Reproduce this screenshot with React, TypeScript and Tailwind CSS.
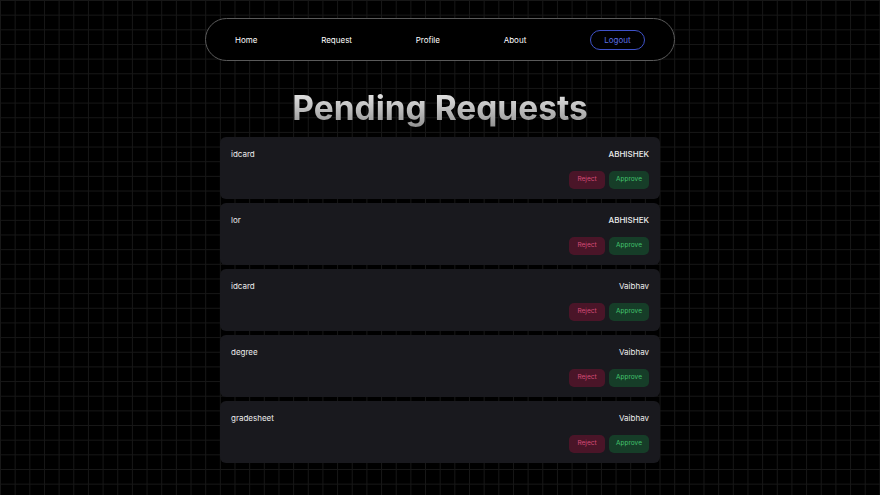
import React from "react";

const requests = [
  { doc: "idcard", name: "ABHISHEK" },
  { doc: "lor", name: "ABHISHEK" },
  { doc: "idcard", name: "Vaibhav" },
  { doc: "degree", name: "Vaibhav" },
  { doc: "gradesheet", name: "Vaibhav" },
];

export default function App() {
  return (
    <div
      className="w-[880px] h-[495px] overflow-hidden bg-black bg-[linear-gradient(to_right,#171717_1px,transparent_1px),linear-gradient(to_bottom,#171717_1px,transparent_1px)] bg-[size:14.667px_14.667px] flex flex-col items-center"
      style={{ fontFamily: "Inter, 'Noto Sans', sans-serif" }}
    >
      <nav className="mt-[18px] w-[470px] h-[43px] rounded-full border border-[#5a5a5a] bg-black flex items-center justify-between px-[29px] text-[8px] text-white">
        <span>Home</span>
        <span>Request</span>
        <span>Profile</span>
        <span>About</span>
        <button className="w-[55px] h-[20px] rounded-full border border-[#3f52c9] text-[#5b70e6] text-[8px] flex items-center justify-center">
          Logout
        </button>
      </nav>

      <h1 className="mt-[27px] h-[40px] text-[33.5px] leading-[40px] font-bold bg-[linear-gradient(to_bottom,#f0f0f0,#8f8f8f)] bg-clip-text text-transparent">
        Pending Requests
      </h1>

      <div className="mt-[9px] w-[440px] flex flex-col gap-[4px]">
        {requests.map((r, i) => (
          <div
            key={i}
            className="h-[62px] rounded-[6px] bg-[#19191e] px-[11px] pt-[11px] flex flex-col"
          >
            <div className="h-[12px] flex items-center justify-between text-[8px] text-[#ececec]">
              <span>{r.doc}</span>
              <span className={r.name === "ABHISHEK" ? "font-medium" : ""}>{r.name}</span>
            </div>
            <div className="mt-[11px] flex justify-end gap-[4px]">
              <button className="w-[36px] h-[18px] rounded-[5px] bg-[#4a1528] text-[#d64c78] text-[6.5px] flex items-center justify-center">
                Reject
              </button>
              <button className="w-[40px] h-[18px] rounded-[5px] bg-[#163d28] text-[#42c46e] text-[6.5px] flex items-center justify-center">
                Approve
              </button>
            </div>
          </div>
        ))}
      </div>
    </div>
  );
}
